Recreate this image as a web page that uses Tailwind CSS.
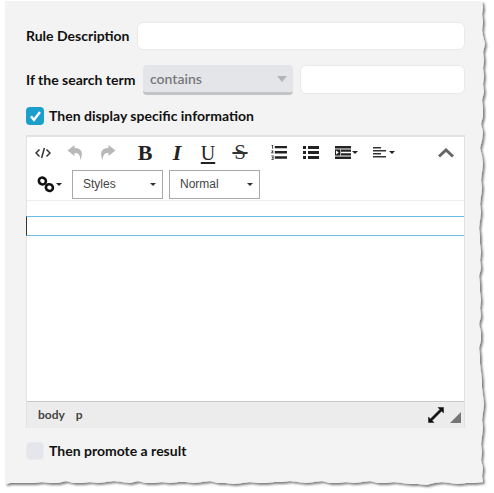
<!DOCTYPE html>
<html lang="en">
<head>
    <meta charset="UTF-8">
    <meta name="viewport" content="width=device-width, initial-scale=1.0">
    <title>Rule editor</title>
    <script src="https://cdn.jsdelivr.net/npm/@tailwindcss/browser@4"></script>
</head>
<body class="bg-white">
    <div class="relative w-[494px] h-[493px] overflow-hidden font-['Lato','Noto_Sans',sans-serif] text-[#111]">
        <!-- torn paper background -->
        <svg class="absolute left-0 top-0" width="494" height="493" viewBox="0 0 494 493">
            <defs>
                <filter id="paperShadow" x="-5%" y="-5%" width="110%" height="110%">
                    <feDropShadow dx="2" dy="2" stdDeviation="1.3" flood-color="#000" flood-opacity="0.5"/>
                </filter>
            </defs>
            <polygon filter="url(#paperShadow)" fill="#f3f3f3" points="5,1 482,1 483,8 482,14 483,22 482,30 483,36 485,44 483,52 484,60 483,68 484,76 483,84 484,92 482,100 483,108 483,116 481,124 483,132 482,140 480,148 482,156 483,164 482,172 481,180 482,188 481,196 480,204 481,212 480,220 479,228 480,236 480,244 481,252 480,260 481,268 479,276 480,284 480,292 481,300 480,308 481,316 479,324 481,332 481,340 479,348 480,356 480,364 481,372 482,380 482,388 483,396 484,404 483,412 482,420 483,428 482,436 481,444 482,452 481,460 483,468 482,476 483,482 474,483 466,483 458,484 450,483 442,482 434,483 426,485 418,484 410,484 402,483 394,482 386,483 378,483 370,481 362,482 354,483 346,482 338,483 330,483 322,481 314,482 306,483 298,482 290,481 282,482 274,482 266,483 258,483 250,482 242,483 234,484 226,483 218,483 210,481 202,482 194,483 186,482 178,482 170,483 162,482 154,483 146,483 138,481 130,483 122,482 114,481 106,482 98,483 90,482 82,483 74,483 66,481 58,483 50,483 42,482 34,483 26,483 18,483 10,483 5,484"/>
        </svg>

        <div class="relative flex flex-col pl-[26px] pr-[29px] pt-[22px]">
            <div class="flex items-center h-[28px]">
                <label class="w-[111px] shrink-0 text-[14px] font-bold leading-none">Rule Description</label>
                <div class="flex-1 h-[28px] bg-white rounded-md border border-[#e9e9ec]"></div>
            </div>

            <div class="flex items-center h-[30px] mt-[15px]">
                <label class="w-[117px] shrink-0 text-[14px] font-bold leading-none">If the search term</label>
                <div class="w-[150px] h-[30px] flex items-center justify-between pl-[7px] pr-[6px] bg-[#e4e5e9] rounded-[4px] border-b-[3px] border-[#c4c4c6]">
                    <span class="text-[14px] font-semibold text-[#77787c]">contains</span>
                    <span class="w-0 h-0 border-x-[5px] border-x-transparent border-t-[6px] border-t-[#b4b4b6]"></span>
                </div>
                <div class="flex-1 h-[29px] -mt-[2px] ml-[7px] bg-white rounded-md border border-[#e9e9ec]"></div>
            </div>

            <div class="flex items-center gap-[5px] h-[18px] mt-[12px]">
                <span class="flex items-center justify-center w-[18px] h-[18px] rounded-[4px] bg-[#1b9fcb]">
                    <svg width="13" height="12" viewBox="0 0 13 12"><path d="M2 6.4 L5 9.8 L11 2" fill="none" stroke="#fff" stroke-width="2.4"/></svg>
                </span>
                <span class="text-[14px] font-bold leading-none">Then display specific information</span>
            </div>

            <!-- editor -->
            <div class="mt-[10px] h-[293px] flex flex-col bg-white border-t-2 border-x border-[#e2e2e2] border-b-0">
                <div class="h-[64px] border-b border-[#ececec]">
                    <div class="flex items-center h-[31px] text-[#222]">
                        <button class="flex items-center justify-center w-[32px] h-full">
                            <svg width="16" height="12" viewBox="0 0 16 12" fill="none" stroke="#333" stroke-width="1.5"><path d="M4.5 2.5 L1 6 L4.5 9.5M11.5 2.5 L15 6 L11.5 9.5M9.4 1 L6.6 11"/></svg>
                        </button>
                        <button class="flex items-center justify-center w-[32px] h-full">
                            <svg width="17" height="15" viewBox="0 0 16 15"><path d="M7 0 L0 5.5 L7 11 V8 C10.5 7.8 12.6 9.5 12.8 15 C15.8 9 15 3 7 3 Z" fill="#b8b8b8"/></svg>
                        </button>
                        <button class="flex items-center justify-center w-[32px] h-full">
                            <svg width="17" height="15" viewBox="0 0 16 15"><path d="M9 0 L16 5.5 L9 11 V8 C5.5 7.8 3.4 9.5 3.2 15 C0.2 9 1 3 9 3 Z" fill="#b8b8b8"/></svg>
                        </button>
                        <button class="flex items-center justify-center w-[32px] h-full ml-[6px] font-['Liberation_Serif',serif] font-bold text-[22px] leading-none">B</button>
                        <button class="flex items-center justify-center w-[32px] h-full font-['Liberation_Serif',serif] font-bold italic text-[22px] leading-none">I</button>
                        <button class="flex items-center justify-center w-[30px] h-full font-['Liberation_Serif',serif] text-[20px] leading-none underline underline-offset-2 decoration-2">U</button>
                        <button class="flex items-center justify-center w-[34px] h-full font-['Liberation_Serif',serif] text-[21px] leading-none line-through text-[#333]">&hairsp;S&hairsp;</button>
                        <button class="flex items-center justify-center w-[32px] h-full ml-[6px]">
                            <svg width="16" height="17" viewBox="0 0 17 17" fill="#222"><path d="M4 1.5h13v2.6H4zM4 7h13v2.6H4zM4 12.6h13v2.6H4z"/><path d="M0.6 0.5h1.6v4H1.3V1.4H.6zM.4 6.3h2.2v.8L1.4 8.6h1.3v.8H.3v-.8l1.3-1.5H.4zM.4 11.6h2.3v4.8H.4v-.8h1.4v-1.2H.8v-.8h1V12.4H.4z"/></svg>
                        </button>
                        <button class="flex items-center justify-center w-[32px] h-full">
                            <svg width="16" height="13" viewBox="0 0 16 13" fill="#222"><path d="M0 0h3v3H0zM5 0h11v3H5zM0 5h3v3H0zM5 5h11v3H5zM0 10h3v3H0zM5 10h11v3H5z"/></svg>
                        </button>
                        <button class="flex items-center justify-center gap-px w-[36px] h-full pl-[2px]">
                            <svg width="16" height="13" viewBox="0 0 16 13" fill="#222"><path d="M0 0h16v2.6H0zM0 10.4h16V13H0zM6 3.6H16v2.2H6zM6 7.2H16v2.2H6z"/><path d="M0 3.4h5.4v6.2H0z"/><path d="M1 4.5 L3.8 6.5 L1 8.5z" fill="#fff"/></svg>
                            <span class="w-0 h-0 border-x-[3px] border-x-transparent border-t-[3px] border-t-[#222]"></span>
                        </button>
                        <button class="flex items-center justify-center gap-[3px] w-[40px] h-full ml-[1px]">
                            <svg width="13" height="11" viewBox="0 0 13 11" fill="#333"><path d="M0 0h8v1.6H0zM0 3h13v1.6H0zM0 6h8v1.6H0zM0 9h13v1.6H0z"/></svg>
                            <span class="w-0 h-0 border-x-[3px] border-x-transparent border-t-[3px] border-t-[#222]"></span>
                        </button>
                        <button class="flex items-center justify-center w-[32px] h-full ml-auto mr-[2px]">
                            <svg width="16" height="10" viewBox="0 0 16 10" fill="none" stroke="#666" stroke-width="3"><path d="M1 8.5 L8 2 L15 8.5"/></svg>
                        </button>
                    </div>
                    <div class="flex items-center h-[30px] mt-[1px]">
                        <button class="flex items-center justify-center gap-px w-[45px] h-full">
                            <svg width="18" height="17" viewBox="0 0 18 17" fill="none" stroke="#111" stroke-width="2.6"><ellipse cx="5.4" cy="5" rx="3.6" ry="3.3" transform="rotate(30 5.4 5)"/><ellipse cx="12.4" cy="11.6" rx="3.6" ry="3.3" transform="rotate(30 12.4 11.6)"/></svg>
                            <span class="w-0 h-0 border-x-[3px] border-x-transparent border-t-[3px] border-t-[#222]"></span>
                        </button>
                        <div class="flex items-center justify-between w-[91px] h-[29px] pl-[10px] pr-[6px] border border-[#a9a9a9] font-['Liberation_Sans',sans-serif] text-[12px] text-[#444]">
                            <span>Styles</span>
                            <span class="w-0 h-0 border-x-[3px] border-x-transparent border-t-[3px] border-t-[#333]"></span>
                        </div>
                        <div class="flex items-center justify-between w-[91px] h-[29px] ml-[6px] pl-[10px] pr-[6px] border border-[#a9a9a9] font-['Liberation_Sans',sans-serif] text-[12px] text-[#444]">
                            <span>Normal</span>
                            <span class="w-0 h-0 border-x-[3px] border-x-transparent border-t-[3px] border-t-[#333]"></span>
                        </div>
                    </div>
                </div>

                <div class="flex-1 pt-[15px]">
                    <div class="h-[20px] border-y border-[#6ebcec] border-l border-l-[#333] -ml-px"></div>
                </div>

                <div class="flex items-center h-[27px] bg-[#ececec] border-t border-[#c9c9c9] pl-[11px] pr-[3px] text-[12px] font-bold text-[#444]">
                    <span>body</span>
                    <span class="ml-[11px]">p</span>
                    <svg class="ml-auto" width="16" height="16" viewBox="0 0 16 16" fill="#111" stroke="#111" stroke-width="0.5"><path d="M10 0.5H15.5V6L13.6 4.1L4.1 13.6L6 15.5H0.5V10L2.4 11.9L11.9 2.4Z"/></svg>
                    <svg class="ml-[6px] mt-[4px]" width="11" height="11" viewBox="0 0 11 11"><path d="M11 0V11H0Z" fill="#777"/></svg>
                </div>
            </div>

            <div class="flex items-center gap-[5px] h-[18px] mt-[14px]">
                <span class="w-[18px] h-[18px] rounded-[4px] bg-[#e4e6ec] border border-[#eaebef]"></span>
                <span class="text-[14px] font-bold leading-none">Then promote a result</span>
            </div>
        </div>
    </div>
</body>
</html>
